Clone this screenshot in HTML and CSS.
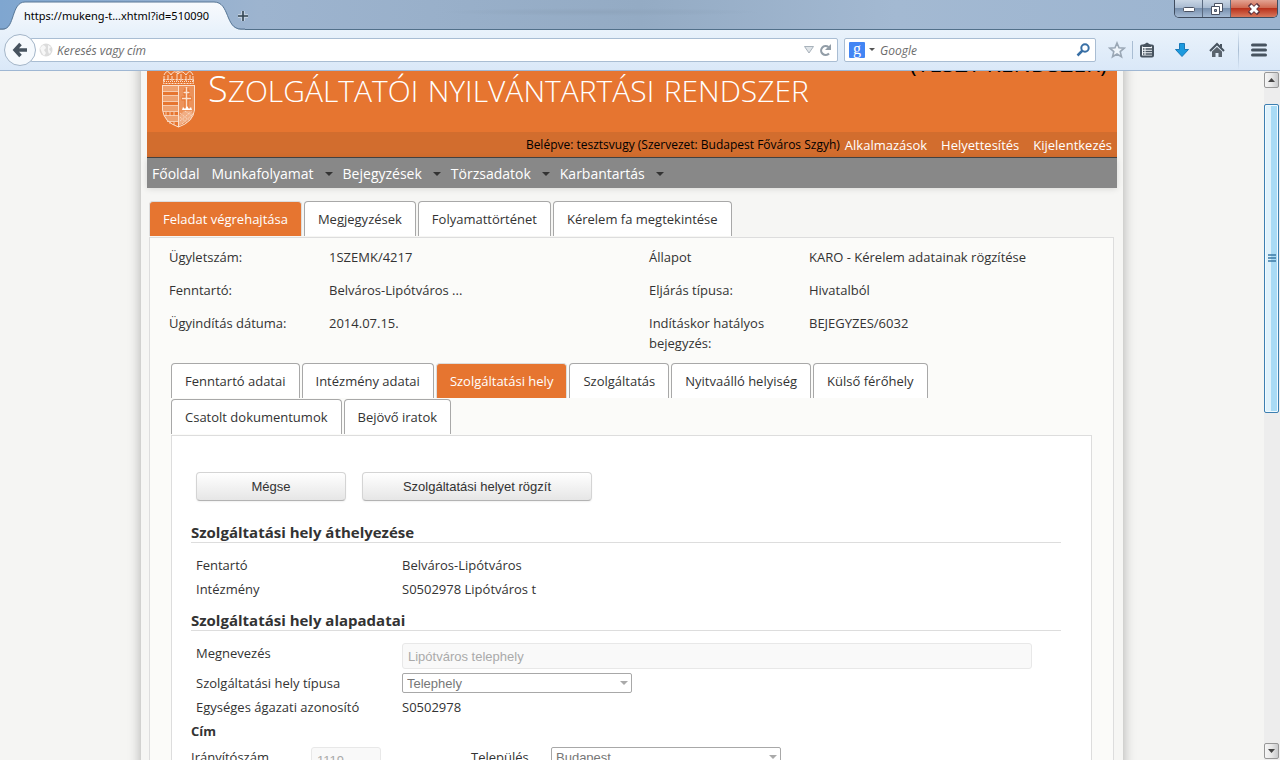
FILE: index.html
```html
<!DOCTYPE html>
<html lang="hu">
<head>
<meta charset="utf-8">
<title>Szolgáltatói nyilvántartási rendszer</title>
<link rel="stylesheet" href="styles.css">
</head>
<body>
<div class="titlebar">
  <div class="browser-tab">
    <svg class="tab-shape" viewBox="0 0 245 30" preserveAspectRatio="none" aria-hidden="true">
      <defs><linearGradient id="tabfill" x1="0" y1="0" x2="0" y2="1"><stop offset="0" stop-color="#f8fafd"/><stop offset="1" stop-color="#e9f2fb"/></linearGradient></defs>
      <path d="M0 30V29.500H3C15 29.500 11 2 25 2H214C230 2 225 29.500 241 29.500H245V30Z" fill="url(#tabfill)"/>
      <path d="M0 29H3C15 29 11 2 25 2H214C230 2 225 29 241 29H245" fill="none" stroke="#587796"/>
    </svg>
    <span class="tab-title">https://mukeng-t...xhtml?id=510090</span>
  </div>
  <button class="new-tab" aria-label="Új lap"><svg width="12" height="12" viewBox="0 0 12 12"><path d="M6 1v10M1 6h10" stroke="#fff" stroke-opacity=".4" stroke-width="4"/><path d="M6 1v10M1 6h10" stroke="#344552" stroke-width="1.600"/></svg></button>
  <div class="window-buttons">
    <button class="win" aria-label="Kis méret"><svg width="14" height="8" viewBox="0 0 14 8"><rect x="1.500" y="2.500" width="11" height="4" rx="1" fill="#fff" stroke="#4a5263"/></svg></button>
    <button class="win" aria-label="Előző méret"><svg width="14" height="14" viewBox="0 0 14 14"><path d="M4.500 1.500h8v8h-8z" fill="#fff" stroke="#4a5263"/><path d="M1.500 4.500h8v8h-8z" fill="#fff" stroke="#4a5263"/><path d="M4.500 7.500h2v2h-2z" fill="#8ea0b8" stroke="#4a5263"/></svg></button>
    <button class="win close" aria-label="Bezárás"><svg width="14" height="12" viewBox="0 0 14 12"><path d="M4 3l6 6M10 3l-6 6" stroke="#5c3440" stroke-width="4.500" stroke-linecap="square"/><path d="M3.500 2.500l7 7M10.500 2.500l-7 7" stroke="#fff" stroke-width="3"/></svg></button>
  </div>
</div>
<div class="toolbar">
  <button class="back" aria-label="Vissza"><svg width="16" height="16" viewBox="0 0 16 16"><path d="M8.500 2L3 8l5.500 6M3 8h12" fill="none" stroke="#47535f" stroke-width="3.500"/></svg></button>
  <div class="field address">
    <svg width="14" height="14" viewBox="0 0 14 14"><circle cx="7" cy="7" r="6.500" fill="#dcdcdc"/><path d="M1 5l3-3 2 1 1 2-2 2 2 3-2 3-2-3zM9 2l3 2-2 2 2 3-2 2-1-3z" fill="#f7f7f7"/></svg>
    <input type="text" placeholder="Keresés vagy cím" aria-label="Keresés vagy cím">
    <svg width="10" height="8" viewBox="0 0 10 8"><path d="M.5.500h9L5 7z" fill="#dfe4e8" stroke="#a8b2bb"/></svg>
    <button class="plain" aria-label="Frissítés"><svg width="14" height="14" viewBox="0 0 14 14"><path d="M10.500 4A4.500 4.500 0 1 0 11 10.500" fill="none" stroke="#929da7" stroke-width="2.200"/><path d="M13 1v6H7z" fill="#929da7"/></svg></button>
  </div>
  <div class="field search">
    <span class="google">g</span>
    <svg width="6" height="4" viewBox="0 0 6 4"><path d="M0 0h6L3 3z" fill="#555"/></svg>
    <input type="text" placeholder="Google" aria-label="Google">
    <button class="plain" aria-label="Keresés"><svg width="14" height="14" viewBox="0 0 14 14"><circle cx="9" cy="5" r="3.700" fill="none" stroke="#386fa5" stroke-width="2"/><path d="M6.500 7.500L1.500 12.500" stroke="#386fa5" stroke-width="2.500"/></svg></button>
  </div>
  <div class="tools">
    <button class="plain" aria-label="Könyvjelző"><svg width="18" height="18" viewBox="0 0 18 18"><path d="M9 2l2 4.800 5.200.400-4 3.400 1.300 5.200L9 13l-4.500 2.800 1.300-5.200-4-3.400 5.200-.4z" fill="#eef4fa" stroke="#9aa7b5" stroke-width="1.600"/></svg></button>
    <i class="sep"></i>
    <button class="plain" aria-label="Könyvjelzők"><svg width="16" height="16" viewBox="0 0 16 16"><rect x="2" y="3.500" width="12" height="11" rx="1" fill="#f4f8fc" stroke="#47535f" stroke-width="2"/><path d="M4 3L8 .5 12 3v2H4z" fill="#47535f"/><path d="M4 7h1.500M6.500 7H13M4 9.500h1.500M6.500 9.500H13M4 12h1.500M6.500 12H13" stroke="#47535f" stroke-width="1.300"/></svg></button>
    <button class="plain" aria-label="Letöltések"><svg width="16" height="16" viewBox="0 0 16 16"><path d="M5.500 1.500h5v6h4L8 14.500 1.500 7.500h4z" fill="#1c9ade" stroke="#1879b8"/></svg></button>
    <button class="plain" aria-label="Kezdőlap"><svg width="16" height="16" viewBox="0 0 16 16"><path d="M1 9L8 2l7 7" fill="none" stroke="#47535f" stroke-width="2"/><path d="M3 9.500L8 5l5 4.500V15H9.500v-4h-3v4H3z" fill="#59636d"/><path d="M11 2h2v4l-2-2z" fill="#47535f"/></svg></button>
    <i class="sep tall"></i>
    <button class="plain" aria-label="Menü"><svg width="16" height="14" viewBox="0 0 16 14"><path d="M1.500 2h13M1.500 7h13M1.500 12h13" stroke="#47535f" stroke-width="3" stroke-linecap="round"/></svg></button>
  </div>
</div>

<div class="viewport">
<div class="canvas">
<main class="page">
  <header class="banner">
    <svg class="arms" width="35" height="60" viewBox="0 0 35 60" aria-hidden="true">
      <g fill="none" stroke="#fbe0cd">
        <path d="M3 7Q6 0 10 7Q13 1 17 6Q21 1 25 7Q29 0 32 7M17 6V1M15 3h4" />
        <path d="M3 8v6M7 7v5M11 8v5M16 6v7M20 6v7M25 8v5M29 7v5M32 8v6"/>
        <path d="M2.500 11.500h30v4h-30z" stroke-dasharray="2 1"/>
        <path d="M3 13.500h29" stroke-dasharray="1 1"/>
        <path d="M1 17.500h33M1.500 17v25Q3 54 17.500 59Q32 54 33.500 42V17"/>
        <path d="M17.500 17v42"/>
      </g>
      <path d="M2 18h15v5H2zM2 28h15v5H2zM2 38h15v5H2zM3 48h14v5H6z" fill="#fbe0cd" fill-opacity=".4"/>
      <path d="M2 23.500h15M2 27.500h15M2 33.500h15M2 37.500h15M2 43.500h15M3 47.500h14M6 53.500h11M5 44v4M9 44v4M13 44v4M9 54v2M13 54v3" stroke="#fbe0cd" stroke-opacity=".8"/>
      <path d="M18 18h15v24l-3 8-12 8z" fill="#fbe0cd" fill-opacity=".28"/>
      <path d="M25.500 20v20M22 24.500h7M20.500 30.500h10" stroke="#e6742f" stroke-width="4"/>
      <path d="M25.500 19v21M22.500 24.500h6M21 30.500h9" stroke="#fbe0cd" stroke-width="1.500"/>
      <path d="M21 42l1-3 2 2 2-3 2 3 2-2 1 3z" fill="#fff"/>
      <path d="M18 48l5-5h6l4 3-3 6-12 6z" fill="#fbe0cd" fill-opacity=".35"/>
      <path d="M19 45l10 8M19 49l7 6M24 43l8 6M19 53l12-10M21 56l11-10" stroke="#fbe0cd" stroke-dasharray="1 1"/>
    </svg>
    <h1>S<span>zolgáltatói</span> <span>nyilvántartási</span> <span>rendszer</span></h1>
    <p class="mode">(TESZT RENDSZER)</p>
  </header>
  <div class="userbar">
    <span>Belépve: tesztsvugy (Szervezet: Budapest Főváros Szgyh)</span>
    <a href="#">Alkalmazások</a><a href="#">Helyettesítés</a><a href="#">Kijelentkezés</a>
  </div>
  <nav class="menu">
    <a href="#">Főoldal</a><a class="drop" href="#">Munkafolyamat</a><a class="drop" href="#">Bejegyzések</a><a class="drop" href="#">Törzsadatok</a><a class="drop" href="#">Karbantartás</a>
  </nav>
  <div class="tabs main-tabs">
    <button class="tab active">Feladat végrehajtása</button><button class="tab">Megjegyzések</button><button class="tab">Folyamattörténet</button><button class="tab">Kérelem fa megtekintése</button>
  </div>
  <section class="task">
    <dl class="facts">
      <dt>Ügyletszám:</dt><dd>1SZEMK/4217</dd><dt>Állapot</dt><dd>KARO - Kérelem adatainak rögzítése</dd>
      <dt>Fenntartó:</dt><dd>Belváros-Lipótváros ...</dd><dt>Eljárás típusa:</dt><dd>Hivatalból</dd>
      <dt>Ügyindítás dátuma:</dt><dd>2014.07.15.</dd><dt>Indításkor hatályos bejegyzés:</dt><dd>BEJEGYZES/6032</dd>
    </dl>
    <div class="tabs sub-tabs">
      <button class="tab">Fenntartó adatai</button><button class="tab">Intézmény adatai</button><button class="tab active">Szolgáltatási hely</button><button class="tab">Szolgáltatás</button><button class="tab">Nyitvaálló helyiség</button><button class="tab">Külső férőhely</button><button class="tab">Csatolt dokumentumok</button><button class="tab">Bejövő iratok</button>
    </div>
    <form class="panel">
      <div class="actions">
        <button type="button" class="btn">Mégse</button>
        <button type="button" class="btn wide">Szolgáltatási helyet rögzít</button>
      </div>
      <h2>Szolgáltatási hely áthelyezése</h2>
      <div class="rows">
        <span>Fentartó</span><span>Belváros-Lipótváros</span>
        <span>Intézmény</span><span>S0502978 Lipótváros t</span>
      </div>
      <h2>Szolgáltatási hely alapadatai</h2>
      <div class="rows">
        <label for="name">Megnevezés</label><input id="name" class="box" type="text" value="Lipótváros telephely" disabled>
        <label for="type">Szolgáltatási hely típusa</label><span class="pick"><select id="type" disabled><option>Telephely</option></select></span>
        <span>Egységes ágazati azonosító</span><span>S0502978</span>
      </div>
      <h3>Cím</h3>
      <div class="address-row">
        <label for="zip">Irányítószám</label><input id="zip" class="box" type="text" value="1119" disabled>
        <label for="city">Település</label><span class="pick"><select id="city" disabled><option>Budapest</option></select></span>
      </div>
    </form>
  </section>
</main>
</div>
<div class="scrollbar">
  <button class="arrow" aria-label="Fel"><svg width="7" height="4" viewBox="0 0 7 4"><path d="M3.500 0L7 4H0z" fill="#444"/></svg></button>
  <div class="track"><div class="thumb"><svg width="8" height="9" viewBox="0 0 8 9"><path d="M0 1h8M0 4h8M0 7h8" stroke="#3b7ba5" stroke-width="1.500"/></svg></div></div>
  <button class="arrow" aria-label="Le"><svg width="7" height="4" viewBox="0 0 7 4"><path d="M0 0h7L3.500 4z" fill="#444"/></svg></button>
</div>
</div>
</body>
</html>
```
FILE: styles.css
```css
* { box-sizing: border-box; }
body {
  margin: 0;
  height: 100vh;
  display: flex;
  flex-direction: column;
  overflow: hidden;
  font: 13px/20px "Open Sans", "Noto Sans", sans-serif;
  color: #333;
  background: #f5f5f3;
}
button, input, select { font: inherit; color: inherit; }
button { padding: 0; cursor: pointer; }
a { text-decoration: none; }
svg { display: block; flex: none; }

/* Browser frame */
.titlebar {
  flex: none;
  height: 30px;
  display: flex;
  align-items: flex-start;
  background:
    radial-gradient(ellipse at 600px 12px, #8fa5bd 0, transparent 160px),
    linear-gradient(90deg, #7fa6d0 0, #9db4cf 260px, #94abc4 50%, #a3b9d2 70%, #9bb4d0 100%);
  border-bottom: 1px solid #52708a;
}
.browser-tab {
  display: grid;
  width: 245px;
  height: 30px;
  flex: none;
}
.browser-tab > * { grid-area: 1 / 1; }
.tab-shape { width: 100%; height: 30px; }
.tab-title {
  z-index: 1;
  padding: 6px 0 0 24px;
  font: 11px/20px "Noto Sans", sans-serif;
  color: #000;
  white-space: nowrap;
}
.new-tab {
  border: 0;
  background: none;
  margin: 10px 0 0 -8px;
}
.window-buttons {
  display: flex;
  margin: 0 2px 0 auto;
  border: 1px solid #3f4c5f;
  border-top: 0;
  border-radius: 0 0 5px 5px;
  overflow: hidden;
}
.win {
  width: 28px;
  height: 17px;
  display: grid;
  place-items: center;
  border: 0;
  border-right: 1px solid #5a6a80;
  background: linear-gradient(#c9d6e5, #a9bbd1 45%, #7890ae 50%, #a5bad3);
}
.win.close {
  width: 46px;
  border: 0;
  background: linear-gradient(#e3a393, #cf6a52 45%, #b9321c 50%, #d8785c);
}
.toolbar {
  flex: none;
  height: 41px;
  display: flex;
  align-items: center;
  padding: 0 13px 0 4px;
  background: linear-gradient(#e9f2fb, #dae8f8);
  border-bottom: 1px solid #9fb7d3;
}
.back {
  z-index: 1;
  width: 32px;
  height: 32px;
  flex: none;
  display: grid;
  place-items: center;
  border: 1px solid #a3b5c8;
  border-radius: 50%;
  background: #f5f9fd;
}
.field {
  height: 24px;
  display: flex;
  align-items: center;
  gap: 4px;
  background: #fff;
  border: 1px solid #a9bdd3;
  border-radius: 2px;
}
.field input {
  flex: 1;
  min-width: 0;
  border: 0;
  padding: 2px 0 0;
  background: none;
  font: italic 12px/20px "Open Sans", "Noto Sans", sans-serif;
}
.field input::placeholder { color: #6c6c6c; opacity: 1; }
.address {
  flex: 1;
  margin-left: -6px;
  padding: 0 5px 0 8px;
}
.search {
  width: 252px;
  margin-left: 6px;
  padding: 0 5px 0 4px;
}
.search input { margin-left: 1px; }
.google {
  width: 16px;
  height: 16px;
  border-radius: 1px;
  background: #4285f4;
  color: #fff;
  font: 16px/13px "Liberation Serif", serif;
  text-align: center;
}
.plain {
  border: 0;
  background: none;
}
.tools {
  display: flex;
  align-items: center;
  margin-left: 12px;
}
.tools .plain + .plain { margin-left: 19px; }
.sep {
  width: 1px;
  height: 18px;
  background: #a9bdd3;
  margin: 0 6px;
}
.sep.tall { height: 40px; margin: 0 12px 0 13px; background: linear-gradient(transparent, #a9bdd3, transparent); }

.viewport {
  flex: 1;
  min-height: 0;
  display: flex;
}
.canvas {
  flex: 1;
  overflow: hidden;
}
.scrollbar {
  width: 16px;
  display: flex;
  flex-direction: column;
  padding: 1px 1px 1px 0;
  background: #ededed;
}
.arrow {
  height: 16px;
  display: grid;
  place-items: center;
  border: 1px solid #979797;
  border-radius: 2px;
  background: linear-gradient(90deg, #f6f6f6, #e8e8e8 50%, #c9cacc);
}
.track { flex: 1; padding: 16px 0 0; }
.thumb {
  height: 48.4%;
  display: grid;
  place-items: center;
  border: 1px solid #3c7fb1;
  border-radius: 2px;
  box-shadow: inset 0 0 0 1px #f0faff;
  background: linear-gradient(90deg, #dff2fc 50%, #a9dbf5 50%);
}

/* Page */
.page {
  max-width: 982px;
  min-height: 800px;
  margin: -40px auto 0;
  padding: 0 6px;
  background: #f6f6f4;
  box-shadow: 0 0 12px rgba(0, 0, 0, .3);
}
.banner {
  height: 101px;
  display: flex;
  align-items: flex-start;
  padding: 37px 10px 0 14px;
  background: #e67530;
  color: #fff;
}
.banner h1 {
  margin: -3px auto 0 12px;
  font-size: 36px;
  font-weight: 300;
  line-height: 48px;
  white-space: nowrap;
}
.banner h1 span { font-size: 30px; text-transform: uppercase; }
.mode {
  margin: -20px 0 0;
  color: #000;
  font-size: 23px;
  line-height: 30px;
  white-space: nowrap;
}
.userbar {
  height: 26px;
  display: flex;
  justify-content: flex-end;
  align-items: center;
  padding: 0 5px;
  background: #d26d2e;
  border-bottom: 1px solid #444;
  color: #000;
  font-size: 12px;
}
.userbar a { color: #fff; font-size: 13px; margin-left: 14px; }
.userbar span + a { margin-left: 5px; }
.menu {
  height: 30px;
  display: flex;
  align-items: center;
  gap: 12px;
  padding: 2px 5px 0;
  background: #888;
  box-shadow: 0 1px 6px rgba(0, 0, 0, .12);
  font-size: 14px;
}
.menu a { color: #fff; }
.menu .drop { display: flex; align-items: center; gap: 11px; margin-right: -2px; }
.drop::after, .pick::after {
  content: "";
  border: 4px solid transparent;
  border-top-color: #333;
  border-bottom: 0;
}
.tabs {
  display: flex;
  flex-wrap: wrap;
  gap: 1px 2px;
}
.main-tabs { margin: 13px 2px 0; }
.tab {
  height: 35px;
  padding: 0 13px;
  border: 1px solid #a8a8a8;
  border-bottom: 0;
  border-radius: 4px 4px 0 0;
  background: #fff;
}
.tab.active {
  border-color: #ddd;
  background: #e67530;
  color: #fff;
}
.task {
  margin: 1px 3px 0 2px;
  padding: 9px 21px 20px;
  border: 1px solid #ddd;
  background: #fbfbf9;
}
.facts {
  display: grid;
  grid-template-columns: 160px 320px 160px 1fr;
  row-gap: 13px;
  margin: 0 -2px;
}
.facts dt { padding-right: 30px; }
.facts dd { margin: 0; }
.sub-tabs { margin: 10px 120px 1px 0; }
.panel {
  padding: 36px 30px 30px 19px;
  border: 1px solid #ddd;
  background: #fff;
}
.actions { display: flex; gap: 16px; padding-left: 5px; }
.btn {
  width: 150px;
  height: 29px;
  border: 1px solid #d4d4d4;
  border-bottom-color: #b3b3b3;
  border-radius: 4px;
  background: linear-gradient(#fff, #e6e6e6);
  box-shadow: 0 1px 2px rgba(0, 0, 0, .06);
  font: 13px/20px "Liberation Sans", Arial, sans-serif;
}
.wide { width: 230px; }
h2 {
  margin: 22px 0 12px;
  border-bottom: 1px solid #ddd;
  font-size: 15px;
  line-height: 19px;
}
.rows {
  display: grid;
  grid-template-columns: 206px 1fr;
  row-gap: 4px;
  padding-left: 5px;
}
.rows + h2 { margin-top: 12px; }
h3 { margin: 4px 0 6px; font-size: 13px; line-height: 20px; }
.box {
  width: 630px;
  height: 26px;
  padding: 0 5px;
  border: 1px solid #e8e8e8;
  border-radius: 3px;
  background: #f9f9f9;
  color: #aaa;
  font: 13px/20px "Liberation Sans", Arial, sans-serif;
}
.pick {
  width: 230px;
  display: grid;
  grid-template-columns: 1fr 12px;
  align-items: center;
}
.pick select {
  grid-area: 1 / 1 / 2 / 3;
  height: 20px;
  padding: 1px 4px 0;
  appearance: none;
  border: 1px solid #a8a8a8;
  border-radius: 2px;
  background: #fff;
  color: #777;
  opacity: 1;
  font: 13px/18px "Liberation Sans", Arial, sans-serif;
}
.pick::after {
  grid-area: 1 / 2;
  justify-self: start;
  z-index: 1;
  border-top-color: #aaa;
  pointer-events: none;
}
.address-row {
  display: grid;
  grid-template-columns: 120px 160px 80px 230px;
  align-items: start;
}
.address-row .box { width: 70px; }
```
